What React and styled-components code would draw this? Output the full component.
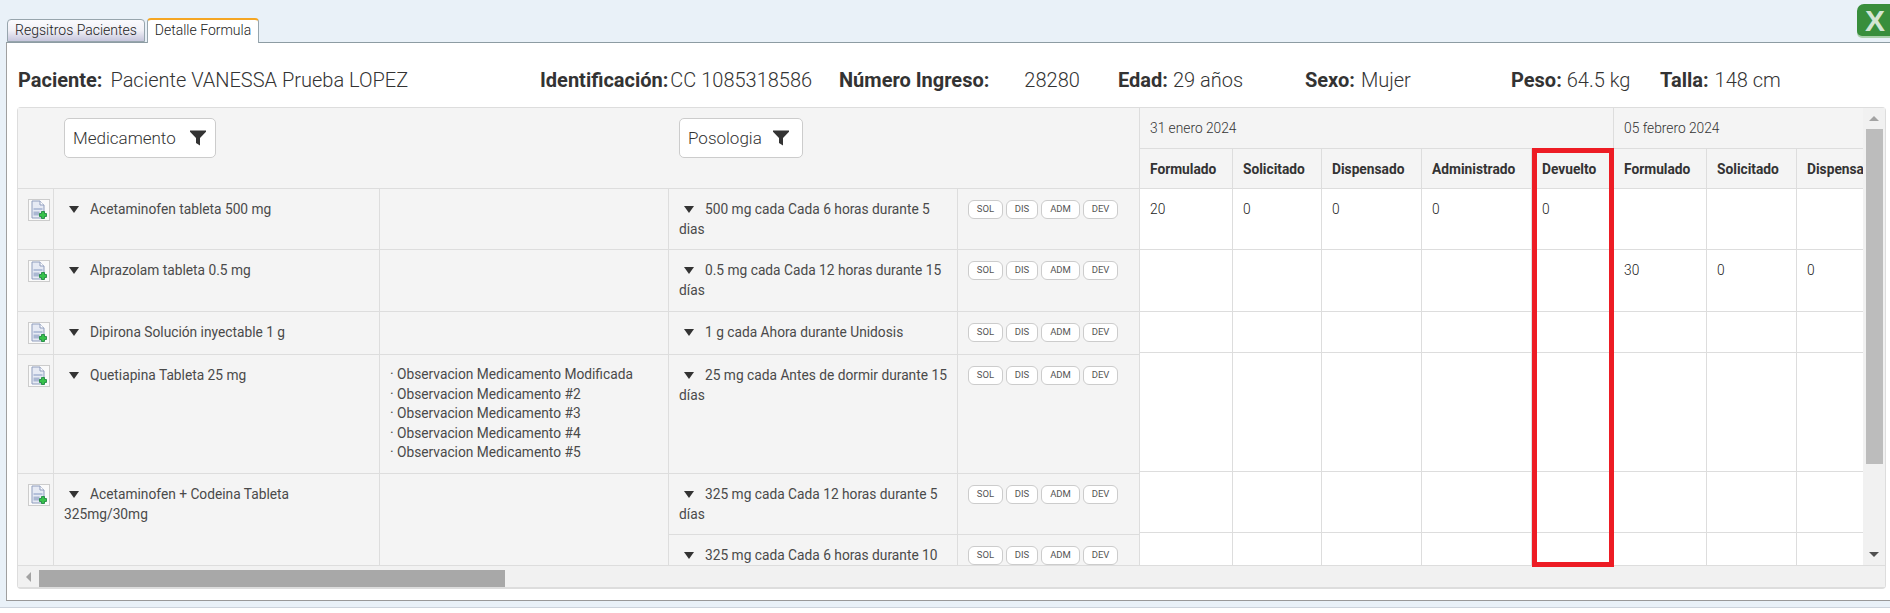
import React from "react";
import styled, { createGlobalStyle } from "styled-components";

const GlobalStyle = createGlobalStyle`
  html, body {
    margin: 0;
    background: #fff;
    overflow: hidden;
  }
  body {
    font-family: Roboto, "Liberation Sans", sans-serif;
  }
`;

const Page = styled.div`
  width: 1890px;
  height: 613px;
  display: flex;
  flex-direction: column;
  overflow: hidden;
  background: #fff;
`;

const Window = styled.div`
  height: 608px;
  background: #e9f1f8;
  border-bottom: 1px solid #ccd3dc;
  box-sizing: border-box;
  padding-left: 6px;
  display: flex;
  flex-direction: column;
`;

const TabBar = styled.div`
  height: 42px;
  flex: none;
  display: flex;
  align-items: flex-end;
  gap: 2px;
  padding-left: 1px;
  position: relative;
  z-index: 1;
`;

const Tab = styled.div`
  height: ${(p) => (p.$active ? "25px" : "23px")};
  width: ${(p) => (p.$active ? "112px" : "138px")};
  margin-bottom: ${(p) => (p.$active ? "-1px" : "0")};
  box-sizing: border-box;
  border: 1px solid #97a5ad;
  border-bottom: ${(p) => (p.$active ? "none" : "1px solid #97a5ad")};
  border-top: ${(p) => (p.$active ? "2px solid #f5a623" : "1px solid #97a5ad")};
  border-radius: 4px 4px 0 0;
  background: ${(p) =>
    p.$active ? "#fff" : "linear-gradient(#fafafd 0%, #f0f0f6 50%, #c6c6dc 100%)"};
  color: #222;
  font-size: 14px;
  font-weight: 300;
  line-height: 21px;
  text-align: center;
  white-space: nowrap;
`;

const ExcelButton = styled.div`
  margin-left: auto;
  align-self: flex-start;
  margin-top: 4px;
  width: 36px;
  margin-right: -3px;
  height: 32px;
  flex: none;
  box-sizing: border-box;
  border-radius: 7px 0 0 5px;
  background: #388e3c;
  box-shadow: 0 2px 0 #a9cfab;
  color: #d3e5d3;
  font-family: "Liberation Sans", sans-serif;
  font-size: 30px;
  font-weight: 700;
  line-height: 33px;
  padding-left: 8px;
`;

const Panel = styled.div`
  flex: 1;
  min-height: 0;
  background: #fff;
  border-top: 1px solid #8d9ca3;
  border-left: 1px solid #a0a0a0;
  border-bottom: 1px solid #999;
  margin-bottom: 6px;
  padding: 0 4px 11px 10px;
  display: flex;
  flex-direction: column;
  box-sizing: border-box;
`;

const InfoRow = styled.div`
  height: 64px;
  flex: none;
  box-sizing: border-box;
  padding: 10px 0 0 1px;
  display: grid;
  grid-template-columns: 522px 299px 279px 187px 206px 149px 1fr;
  align-items: center;
  font-size: 20px;
  color: #333;
  white-space: nowrap;
`;

const InfoItem = styled.div`
  display: flex;
  gap: ${(p) => p.$gap}px;
`;

const InfoLabel = styled.span`
  font-weight: 700;
`;

const InfoValue = styled.span`
  font-weight: 300;
`;

const Frame = styled.div`
  height: 482px;
  flex: none;
  box-sizing: border-box;
  position: relative;
  border: 1px solid #ddd;
  border-bottom: 2px solid #ddd;
  border-radius: 4px;
  display: flex;
  flex-direction: column;
  background: #f1f1f1;
`;

const GridBody = styled.div`
  height: 458px;
  flex: none;
  box-sizing: border-box;
  border-bottom: 1px solid #ddd;
  display: flex;
  overflow: hidden;
`;

const FrozenPane = styled.div`
  width: 1122px;
  flex: none;
`;

const DatesPane = styled.div`
  flex: 1;
  min-width: 0;
  overflow: hidden;
`;

const Grid = styled.table`
  table-layout: fixed;
  border-collapse: separate;
  border-spacing: 0;
  width: ${(p) => p.$width}px;
  font-size: 13.75px;
  line-height: 20px;
  color: #4a4a4a;
`;

const HeadCell = styled.th`
  box-sizing: border-box;
  background: #f4f4f4;
  border-bottom: 1px solid #ddd;
  border-right: ${(p) => (p.$line ? "1px solid #ddd" : "none")};
  padding: ${(p) => p.$pad || "0 10px"};
  text-align: left;
  vertical-align: ${(p) => p.$valign || "middle"};
  font-weight: ${(p) => (p.$bold ? 700 : 300)};
  color: #333;
  font-size: 13.75px;
  white-space: nowrap;
  overflow: hidden;
`;

const Cell = styled.td`
  box-sizing: border-box;
  background: ${(p) => (p.$white ? "#fff" : "#f4f4f4")};
  border-bottom: 1px solid #ddd;
  border-right: 1px solid #ddd;
  padding: ${(p) => p.$pad || "10px 10px 0"};
  vertical-align: top;
  font-weight: ${(p) => (p.$white ? 300 : 400)};
  color: ${(p) => (p.$white ? "#222" : "#4a4a4a")};
`;

const Row = styled.tr`
  height: ${(p) => p.$h}px;
`;

const FilterButton = styled.button`
  display: flex;
  align-items: center;
  gap: ${(p) => p.$gap}px;
  height: 40px;
  width: ${(p) => p.$width}px;
  box-sizing: border-box;
  padding: 0 0 0 8px;
  background: #fff;
  border: 1px solid #ccc;
  border-radius: 5px;
  font-family: inherit;
  font-size: 17px;
  font-weight: 300;
  color: #333;
`;

const IconBox = styled.div`
  width: 22px;
  height: 22px;
  box-sizing: border-box;
  border: 1px solid #ccc;
  background: #fafafa;
  display: flex;
  align-items: center;
  justify-content: center;
`;

const Caret = styled.span`
  display: inline-block;
  width: 0;
  height: 0;
  margin: 0 11px 1px 5px;
  border-left: 5px solid transparent;
  border-right: 5px solid transparent;
  border-top: 7px solid #333;
`;

const ActionRow = styled.div`
  display: flex;
  gap: 3px;
`;

const ActionChip = styled.span`
  height: 19px;
  width: ${(p) => p.$width}px;
  box-sizing: border-box;
  border: 1px solid #ccc;
  border-radius: 6px;
  background: #fff;
  color: #555;
  font-size: 9.5px;
  line-height: 16px;
  text-align: center;
`;

const Obs = styled.div`
  line-height: 19.5px;
`;

const VScroll = styled.div`
  width: 22px;
  flex: none;
  background: #f1f1f1;
  display: flex;
  flex-direction: column;
  align-items: center;
`;

const VArrowSlot = styled.div`
  height: 21px;
  flex: none;
  display: flex;
  align-items: center;
  justify-content: center;
  margin-top: ${(p) => (p.$end ? "auto" : "0")};
`;

const ArrowUp = styled.span`
  border-left: 5px solid transparent;
  border-right: 5px solid transparent;
  border-bottom: 5px solid #a3a3a3;
`;

const ArrowDown = styled.span`
  border-left: 5px solid transparent;
  border-right: 5px solid transparent;
  border-top: 5px solid #505050;
`;

const ArrowLeft = styled.span`
  border-top: 5px solid transparent;
  border-bottom: 5px solid transparent;
  border-right: 5px solid #a3a3a3;
`;

const VThumb = styled.div`
  width: 17px;
  height: 335px;
  flex: none;
  background: #bcbcbc;
`;

const HScroll = styled.div`
  flex: 1;
  display: flex;
  align-items: center;
  background: #f1f1f1;
`;

const HArrowSlot = styled.div`
  width: 21px;
  flex: none;
  display: flex;
  justify-content: center;
`;

const HThumb = styled.div`
  width: 466px;
  height: 17px;
  margin-top: 3px;
  background: #a8a8a8;
`;

const Highlight = styled.div`
  position: absolute;
  left: 1514px;
  top: 40px;
  width: 82px;
  height: 419px;
  box-sizing: border-box;
  border: 5px solid #ed1c24;
  pointer-events: none;
`;

const frozenCols = [36, 326, 289, 289, 182];
const dateCols = [93, 89, 100, 110, 82, 93, 90, 100, 110, 82];
const dateHeads = [
  "Formulado",
  "Solicitado",
  "Dispensado",
  "Administrado",
  "Devuelto",
  "Formulado",
  "Solicitado",
  "Dispensado",
  "Administrado",
  "Devuelto",
];
const chips = [
  ["SOL", 35],
  ["DIS", 32],
  ["ADM", 39],
  ["DEV", 35],
];
const observations = [
  "Observacion Medicamento Modificada",
  "Observacion Medicamento #2",
  "Observacion Medicamento #3",
  "Observacion Medicamento #4",
  "Observacion Medicamento #5",
];

const infoItems = [
  ["Paciente:", "Paciente VANESSA Prueba LOPEZ", 8],
  ["Identificación:", "CC 1085318586", 2],
  ["Número Ingreso:", "28280", 35],
  ["Edad:", "29 años", 5],
  ["Sexo:", "Mujer", 6],
  ["Peso:", "64.5 kg", 5],
  ["Talla:", "148 cm", 6],
];

const dateRows = [
  { h: 61, values: ["20", "0", "0", "0", "0"] },
  { h: 62, values: ["", "", "", "", "", "30", "0", "0"] },
  { h: 41, values: [] },
  { h: 119, values: [] },
  { h: 61, values: [] },
  { h: 60, values: [] },
];

function AddDocIcon() {
  return (
    <svg width="18" height="20" viewBox="0 0 18 20">
      <path d="M2 1h8l4 4v13H2z" fill="#e6eaf4" stroke="#8f9dbd" strokeWidth="1" />
      <path d="M10 1v4h4" fill="#fff" stroke="#8f9dbd" strokeWidth="1" />
      <rect x="3.5" y="8" width="9" height="2" fill="#b4c0da" />
      <rect x="3.5" y="11.5" width="6" height="4" fill="#aab7d2" />
      <path d="M11.5 11.5h3v2h2v3h-2v2h-3v-2h-2v-3h2z" fill="#37c24a" stroke="#17803a" strokeWidth="0.8" />
    </svg>
  );
}

function FilterIcon() {
  return (
    <svg width="16" height="16" viewBox="0 0 16 16">
      <path d="M0 0.5h16v1.2L10 8v7.5L6 13V8L0 1.7z" fill="#333" />
    </svg>
  );
}

function Actions() {
  return (
    <ActionRow>
      {chips.map(([label, width]) => (
        <ActionChip key={label} $width={width}>
          {label}
        </ActionChip>
      ))}
    </ActionRow>
  );
}

function DoseCells({ text }) {
  return (
    <>
      <Cell>
        <Caret />
        {text}
      </Cell>
      <Cell $pad="11px 10px 0">
        <Actions />
      </Cell>
    </>
  );
}

function MedicineRow({ h, name, notes, dose }) {
  return (
    <Row $h={h}>
      <Cell $pad="10px 0 0 10px">
        <IconBox>
          <AddDocIcon />
        </IconBox>
      </Cell>
      <Cell>
        <Caret />
        {name}
      </Cell>
      <Cell>
        {notes &&
          notes.map((note) => <Obs key={note}>· {note}</Obs>)}
      </Cell>
      <DoseCells text={dose} />
    </Row>
  );
}

function FrozenTable() {
  return (
    <Grid $width={1122}>
      <colgroup>
        {frozenCols.map((w, i) => (
          <col key={i} style={{ width: w }} />
        ))}
      </colgroup>
      <thead>
        <Row $h={81}>
          <HeadCell />
          <HeadCell colSpan={2} $valign="top" $pad="10px 0 0 10px">
            <FilterButton $width={152} $gap={14}>
              Medicamento
              <FilterIcon />
            </FilterButton>
          </HeadCell>
          <HeadCell colSpan={2} $valign="top" $pad="10px 0 0 10px" $line>
            <FilterButton $width={124} $gap={11}>
              Posologia
              <FilterIcon />
            </FilterButton>
          </HeadCell>
        </Row>
      </thead>
      <tbody>
        <MedicineRow h={61} name="Acetaminofen tableta 500 mg" dose="500 mg cada Cada 6 horas durante 5 dias" />
        <MedicineRow h={62} name="Alprazolam tableta 0.5 mg" dose="0.5 mg cada Cada 12 horas durante 15 días" />
        <MedicineRow h={43} name="Dipirona Solución inyectable 1 g" dose="1 g cada Ahora durante Unidosis" />
        <MedicineRow
          h={119}
          name="Quetiapina Tableta 25 mg"
          notes={observations}
          dose="25 mg cada Antes de dormir durante 15 días"
        />
        <Row $h={61}>
          <Cell rowSpan={2} $pad="10px 0 0 10px">
            <IconBox>
              <AddDocIcon />
            </IconBox>
          </Cell>
          <Cell rowSpan={2}>
            <Caret />
            Acetaminofen + Codeina Tableta 325mg/30mg
          </Cell>
          <Cell rowSpan={2} />
          <DoseCells text="325 mg cada Cada 12 horas durante 5 días" />
        </Row>
        <Row $h={60}>
          <DoseCells text="325 mg cada Cada 6 horas durante 10 días" />
        </Row>
      </tbody>
    </Grid>
  );
}

function DatesTable() {
  const width = dateCols.reduce((sum, w) => sum + w, 0);
  return (
    <Grid $width={width}>
      <colgroup>
        {dateCols.map((w, i) => (
          <col key={i} style={{ width: w }} />
        ))}
      </colgroup>
      <thead>
        <Row $h={41}>
          <HeadCell colSpan={5} $line>
            31 enero 2024
          </HeadCell>
          <HeadCell colSpan={5} $line>
            05 febrero 2024
          </HeadCell>
        </Row>
        <Row $h={40}>
          {dateHeads.map((head, i) => (
            <HeadCell key={i} $bold $line>
              {head}
            </HeadCell>
          ))}
        </Row>
      </thead>
      <tbody>
        {dateRows.map((row, r) => (
          <Row key={r} $h={row.h}>
            {dateCols.map((_, c) => (
              <Cell key={c} $white>
                {row.values[c]}
              </Cell>
            ))}
          </Row>
        ))}
      </tbody>
    </Grid>
  );
}

export default function App() {
  return (
    <Page>
      <GlobalStyle />
      <Window>
        <TabBar>
          <Tab>Regsitros Pacientes</Tab>
          <Tab $active>Detalle Formula</Tab>
          <ExcelButton>X</ExcelButton>
        </TabBar>
        <Panel>
          <InfoRow>
            {infoItems.map(([label, value, gap]) => (
              <InfoItem key={label} $gap={gap}>
                <InfoLabel>{label}</InfoLabel>
                <InfoValue>{value}</InfoValue>
              </InfoItem>
            ))}
          </InfoRow>
          <Frame>
            <GridBody>
              <FrozenPane>
                <FrozenTable />
              </FrozenPane>
              <DatesPane>
                <DatesTable />
              </DatesPane>
              <VScroll>
                <VArrowSlot>
                  <ArrowUp />
                </VArrowSlot>
                <VThumb />
                <VArrowSlot $end>
                  <ArrowDown />
                </VArrowSlot>
              </VScroll>
            </GridBody>
            <HScroll>
              <HArrowSlot>
                <ArrowLeft />
              </HArrowSlot>
              <HThumb />
            </HScroll>
            <Highlight />
          </Frame>
        </Panel>
      </Window>
    </Page>
  );
}
